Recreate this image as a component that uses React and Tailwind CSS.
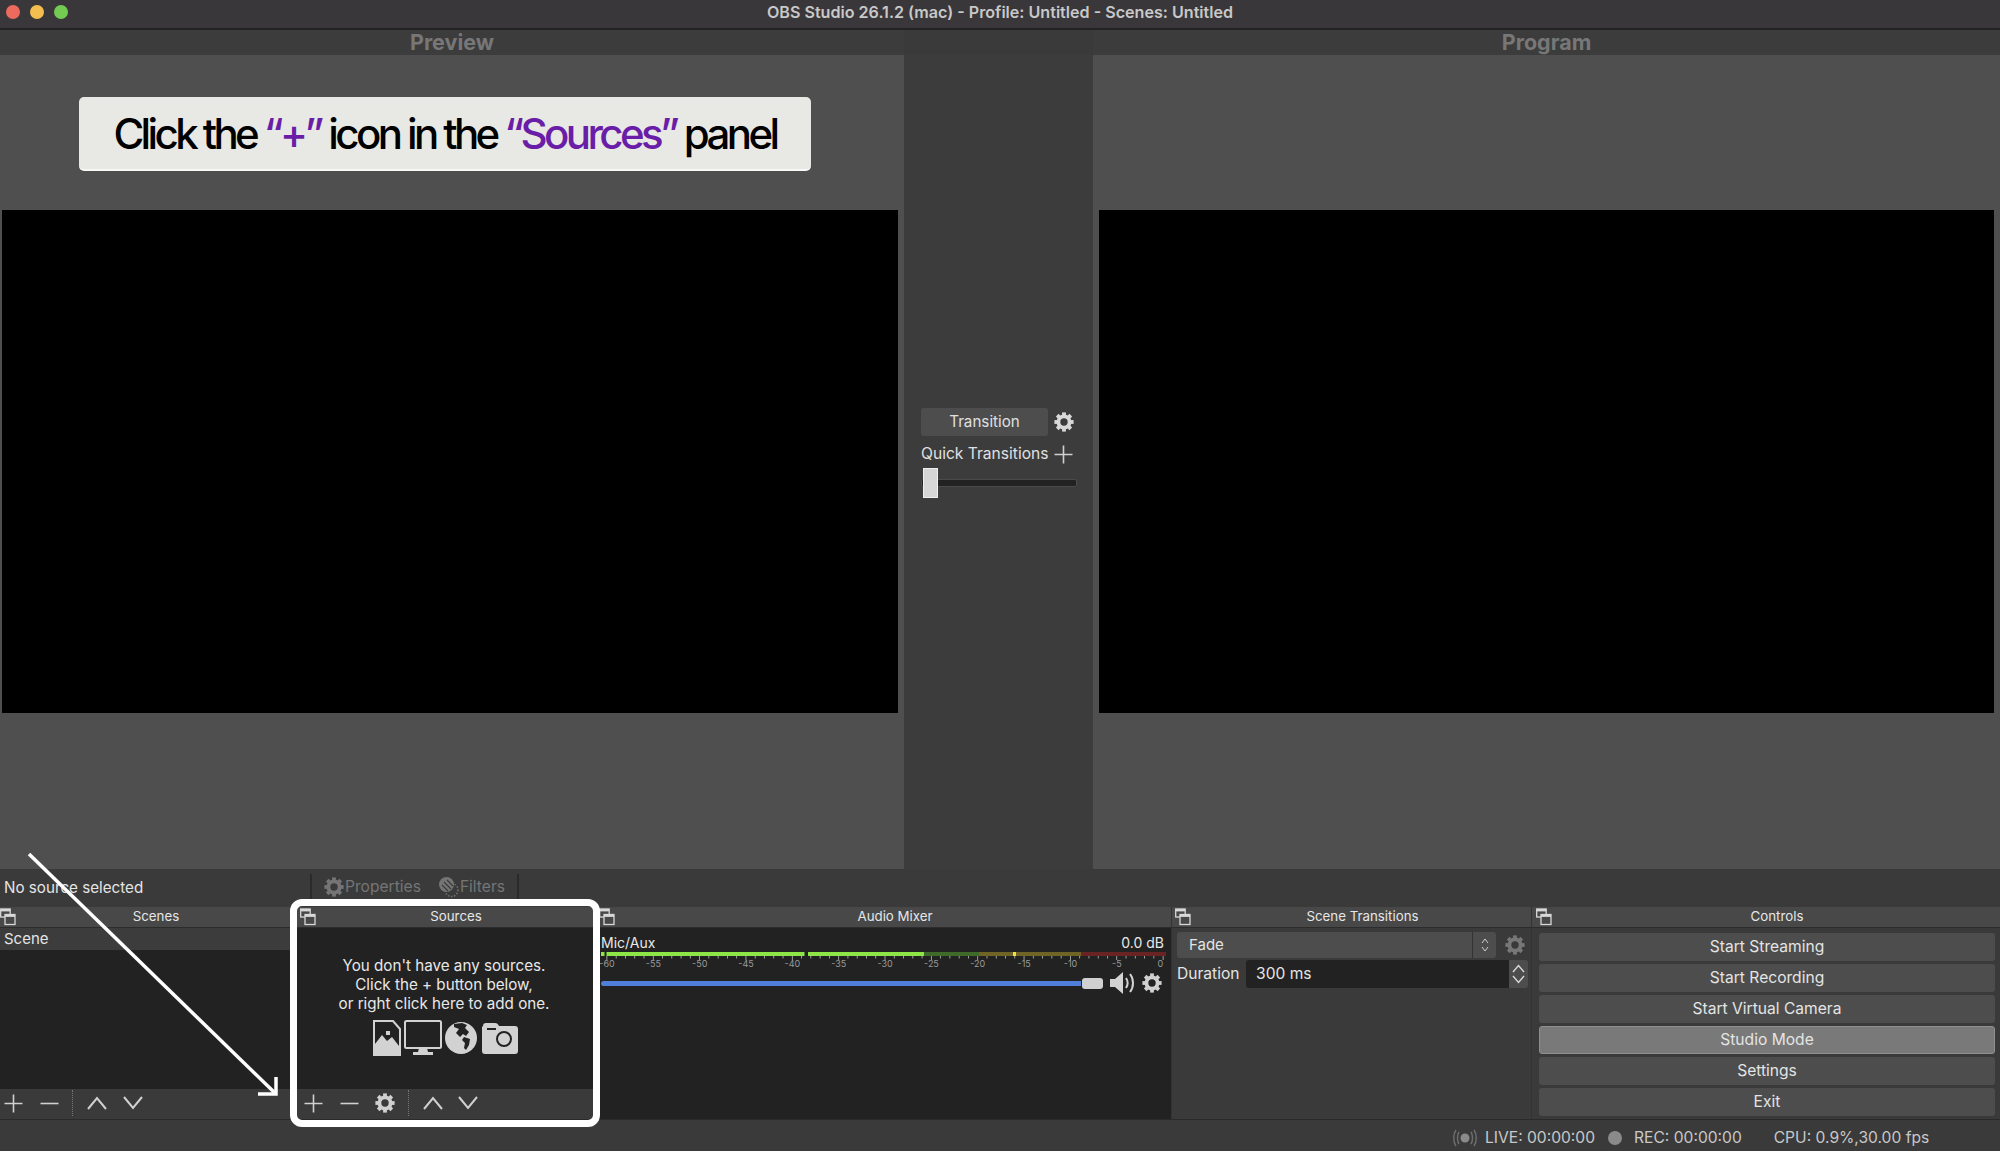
const FONT = { fontFamily: 'Inter, "Liberation Sans", sans-serif' };

const TEETH = [0, 45, 90, 135, 180, 225, 270, 315];

// obs gear: thick ring with eight teeth
const Gear = ({ size = 20, className = 'text-[#d0d0d0]' }) => (
  <svg width={size} height={size} viewBox="0 0 20 20" className={`shrink-0 ${className}`}>
    <circle cx="10" cy="10" r="5.6" fill="none" stroke="currentColor" strokeWidth="3.8" />
    {TEETH.map((deg) => (
      <rect key={deg} x="8.1" y="0.4" width="3.8" height="4" fill="currentColor" transform={`rotate(${deg} 10 10)`} />
    ))}
  </svg>
);

// dock float icon, two overlapped windows
const DockIcon = () => (
  <svg width="16" height="18" viewBox="0 0 16 18" fill="none" stroke="#d8d8d8" strokeWidth="1.3" className="shrink-0">
    <rect x="0.7" y="1" width="9.5" height="8" fill="#484848" />
    <rect x="0.7" y="1" width="9.5" height="2.4" fill="#d8d8d8" stroke="none" />
    <rect x="5" y="6.5" width="10" height="10" fill="#484848" />
    <rect x="5" y="6.5" width="10" height="2.4" fill="#d8d8d8" stroke="none" />
  </svg>
);

const Plus = ({ size = 19, color = '#d0d0d0' }) => (
  <svg width={size} height={size} viewBox="0 0 19 19" stroke={color} strokeWidth="1.6" className="shrink-0">
    <path d="M9.5 0.5V18.5M0.5 9.5H18.5" />
  </svg>
);

const Minus = () => (
  <svg width="19" height="19" viewBox="0 0 19 19" stroke="#d0d0d0" strokeWidth="1.6" className="shrink-0">
    <path d="M0.5 9.5H18.5" />
  </svg>
);

const Up = () => (
  <svg width="20" height="14" viewBox="0 0 20 14" fill="none" stroke="#d0d0d0" strokeWidth="2" className="shrink-0">
    <path d="M1 13L10 2L19 13" />
  </svg>
);

const Down = () => (
  <svg width="20" height="14" viewBox="0 0 20 14" fill="none" stroke="#d0d0d0" strokeWidth="2" className="shrink-0">
    <path d="M1 1L10 12L19 1" />
  </svg>
);

const Dots = () => <div className="w-0 h-[26px] border-l border-dotted border-[#777]" />;

const DockHeader = ({ title, iconClass = 'w-[22px] pl-[3px]' }) => (
  <div className="h-[21px] flex items-center bg-[#484848] border-b border-[#2c2c2c] text-[13.3px] text-[#e6e6e6] shrink-0">
    <div className={iconClass}><DockIcon /></div>
    <div className="flex-1 text-center">{title}</div>
  </div>
);

const ImageIcon = () => (
  <svg width="28" height="36" viewBox="0 0 28 36" className="shrink-0">
    <path d="M1 1H20L27 9V35H1Z" fill="#222" stroke="#d2d2d2" strokeWidth="2" />
    <path d="M2 34V24L9 15L14 21L19 17L26 26V34Z" fill="#d2d2d2" />
    <rect x="13" y="11" width="4" height="4" fill="#d2d2d2" />
  </svg>
);

const MonitorIcon = () => (
  <svg width="38" height="36" viewBox="0 0 38 36" className="shrink-0">
    <rect x="1" y="1" width="36" height="27" rx="1.5" fill="#222" stroke="#d2d2d2" strokeWidth="2" />
    <path d="M15 28H23L24 32H29V35H9V32H14Z" fill="#d2d2d2" />
  </svg>
);

const GlobeIcon = () => (
  <svg width="32" height="32" viewBox="0 0 32 32" className="shrink-0">
    <circle cx="16" cy="16" r="16" fill="#d2d2d2" />
    <path d="M9 2L17 1L22 3L20 6L24 10L21 14L18 12L15 15L11 11L14 7L9 5Z" fill="#222" />
    <path d="M19 15L25 17L24 23L21 28L19 26L20 21L17 18Z" fill="#222" />
  </svg>
);

const CameraIcon = () => (
  <svg width="36" height="32" viewBox="0 0 36 32" className="shrink-0">
    <path d="M1 4C1 2 2 1 4 1H13C15 1 16 2 17 4H33C35 4 36 5 36 7V29C36 31 35 32 33 32H3C1 32 0 31 0 29V5Z" fill="#d2d2d2" />
    <rect x="5" y="6" width="9" height="2" fill="#222" />
    <circle cx="22" cy="17" r="7" fill="#d2d2d2" stroke="#222" strokeWidth="2" />
  </svg>
);

const Speaker = () => (
  <svg width="28" height="24" viewBox="0 0 28 24" className="shrink-0">
    <path d="M1 8H6L14 1V23L6 16H1Z" fill="#d2d2d2" />
    <path d="M17 7C19 10 19 14 17 17M21 3C25 8 25 16 21 21" fill="none" stroke="#d2d2d2" strokeWidth="2" />
  </svg>
);

const FilterIcon = () => (
  <svg width="20" height="21" viewBox="0 0 20 21" fill="none" className="shrink-0">
    <circle cx="12.5" cy="13" r="6.5" stroke="#757575" strokeWidth="1.4" strokeDasharray="1.4 1.6" />
    <circle cx="7.5" cy="7.5" r="7.5" fill="#757575" />
    <path d="M5 5L12 12M8 3L14 9M3 8L9 14" stroke="#3a3a3a" strokeWidth="1.1" />
  </svg>
);

const LiveIcon = () => (
  <svg width="24" height="18" viewBox="0 0 24 18" fill="none" stroke="#6f6f6f" strokeWidth="1.4" className="shrink-0">
    <circle cx="12" cy="9" r="4.5" fill="#8a8a8a" stroke="none" />
    <path d="M6 3C4 6 4 12 6 15M18 3C20 6 20 12 18 15M3 1C0 5 0 13 3 17M21 1C24 5 24 13 21 17" />
  </svg>
);

// level meter and its dB scale
const METER_LABELS = [-60, -55, -50, -45, -40, -35, -30, -25, -20, -15, -10, -5, 0];

const Meter = () => (
  <svg width="566" height="20" viewBox="0 0 566 20" className="block overflow-visible">
    <rect x="0" y="0" width="3.5" height="4" fill="#8ee646" />
    <rect x="5.5" y="0" width="198" height="4" fill="#8ee646" />
    <rect x="207" y="0" width="116" height="4" fill="#8ee646" />
    <rect x="323" y="0" width="55" height="4" fill="#3e6a2a" />
    <rect x="378" y="0" width="102" height="4" fill="#6f6326" />
    <rect x="412" y="0" width="3" height="4" fill="#f2de4a" />
    <rect x="480" y="0" width="85" height="4" fill="#6a2323" />
    {Array.from({ length: 61 }, (_, i) => (
      <rect key={i} x={5.5 + i * 9.27} y="4" width="0.8" height={i % 5 === 0 ? 4 : 2.5} fill="#bbb" />
    ))}
    {METER_LABELS.map((db, i) => (
      <text
        key={db}
        x={6 + i * 46.35}
        y="15"
        fontSize="9"
        fill="#9a9a9a"
        textAnchor={db === 0 ? 'end' : 'middle'}
        style={{ fontFamily: 'Inter, sans-serif' }}
      >
        {db}
      </text>
    ))}
  </svg>
);

const CONTROLS = ['Start Streaming', 'Start Recording', 'Start Virtual Camera', 'Studio Mode', 'Settings', 'Exit'];

const Canvas = () => <div className="h-[503px] bg-black" />;

export default function App() {
  return (
    <div className="relative w-[2000px] h-[1151px] overflow-hidden flex flex-col bg-[#3a3a3a] text-[15.2px] text-[#e4e4e4]" style={FONT}>
      {/* title bar */}
      <div className="relative h-[28px] shrink-0 flex items-center justify-center bg-[#39373a] pb-[4px]">
        <div className="absolute left-[6px] top-[5px] flex gap-[10px]">
          <span className="w-[14px] h-[14px] rounded-full bg-[#ec6a5e]" />
          <span className="w-[14px] h-[14px] rounded-full bg-[#f4bf4f]" />
          <span className="w-[14px] h-[14px] rounded-full bg-[#74cb51]" />
        </div>
        <span className="font-semibold text-[16.1px] text-[#c8c8c8]">OBS Studio 26.1.2 (mac) - Profile: Untitled - Scenes: Untitled</span>
      </div>
      <div className="h-[2px] shrink-0 bg-[#222]" />

      {/* preview / transition / program */}
      <div className="h-[839px] shrink-0 flex">
        <div className="w-[904px] flex flex-col">
          <div className="h-[25px] flex items-center justify-center font-bold text-[21.5px] text-[#777] bg-[#3c3c3c]">Preview</div>
          <div className="flex-1 bg-[#4f4f4f] pt-[155px] pl-[2px] pr-[6px]">
            <Canvas />
          </div>
        </div>
        <div className="w-[189px] bg-[#3c3c3c] mt-[25px] flex flex-col justify-center px-[17px] pb-[18px]">
          <div className="flex items-center">
            <div className="w-[127px] h-[28px] rounded-[3px] bg-[#4d4d4d] flex items-center justify-center text-[#e0e0e0]">Transition</div>
            <Gear className="ml-[6px] text-[#d8d8d8]" />
          </div>
          <div className="flex items-center mt-[6px] h-[24px]">
            <span className="w-[127px] whitespace-nowrap text-[15.6px] text-[#e0e0e0]">Quick Transitions</span>
            <div className="ml-[6px]"><Plus /></div>
          </div>
          <div className="relative mt-[2px] h-[30px] flex items-center w-[156px]">
            <div className="w-full h-[8px] rounded-[2px] bg-[#222] border border-[#4a4a4a]" />
            <div className="absolute left-[2px] top-0 w-[15px] h-[30px] bg-[#d6d6d6] border border-[#eee]" />
          </div>
        </div>
        <div className="flex-1 flex flex-col">
          <div className="h-[25px] flex items-center justify-center font-bold text-[21.5px] text-[#777] bg-[#3c3c3c]">Program</div>
          <div className="flex-1 bg-[#4f4f4f] pt-[155px] pl-[6px] pr-[6px]">
            <Canvas />
          </div>
        </div>
      </div>

      {/* source toolbar */}
      <div className="h-[38px] shrink-0 flex items-center bg-[#3a3a3a]">
        <span className="w-[310px] pl-[4px]">No source selected</span>
        <div className="self-start w-[209px] h-[26px] mt-[5px] border-x-2 border-[#2a2a2a] flex items-center pl-[12px] text-[15.6px] text-[#757575]">
          <Gear className="text-[#757575]" />
          <span className="ml-[1px]">Properties</span>
          <div className="ml-[18px]"><FilterIcon /></div>
          <span className="ml-[1px]">Filters</span>
        </div>
      </div>

      {/* docks */}
      <div className="h-[213px] shrink-0 flex border-b border-[#2a2a2a] text-[14px]">
        <div className="w-[297px] flex flex-col pr-[7px]">
          <DockHeader title="Scenes" iconClass="w-[22px]" />
          <div className="h-[22px] flex items-center pl-[4px] bg-[#3c3c3c] text-[15px]">Scene</div>
          <div className="flex-1 bg-[#222]" />
          <div className="h-[30px] flex items-center bg-[#3a3a3a] pl-[4px] pb-[2px]">
            <Plus />
            <div className="ml-[17px]"><Minus /></div>
            <div className="ml-[13px]"><Dots /></div>
            <div className="ml-[14px]"><Up /></div>
            <div className="ml-[16px]"><Down /></div>
          </div>
        </div>

        <div className="w-[300px] flex flex-col pr-[4px]">
          <DockHeader title="Sources" />
          <div className="flex-1 bg-[#222] flex flex-col items-center pr-[2px] pt-[28px]">
            <div className="text-center text-[15.2px] leading-[19px] text-[#e8e8e8]">
              <div>You don't have any sources.</div>
              <div>Click the + button below,</div>
              <div>or right click here to add one.</div>
            </div>
            <div className="flex items-center gap-[3px] mt-[8px] h-[34px] pl-[3px]">
              <ImageIcon />
              <MonitorIcon />
              <GlobeIcon />
              <div className="ml-[2px]"><CameraIcon /></div>
            </div>
          </div>
          <div className="h-[30px] flex items-center bg-[#3a3a3a] pl-[7px] pb-[2px]">
            <Plus />
            <div className="ml-[17px]"><Minus /></div>
            <Gear className="ml-[16px] text-[#d0d0d0]" />
            <div className="ml-[13px]"><Dots /></div>
            <div className="ml-[14px]"><Up /></div>
            <div className="ml-[15px]"><Down /></div>
          </div>
        </div>

        <div className="w-[574px] flex flex-col bg-[#222]">
          <DockHeader title="Audio Mixer" iconClass="w-[22px] pl-[2px]" />
          <div className="pl-[4px] pr-[7px] pt-[4px]">
            <div className="flex justify-between h-[20px] items-center text-[14px] text-[#e8e8e8]">
              <span>Mic/Aux</span>
              <span>0.0 dB</span>
            </div>
            <Meter />
            <div className="flex items-center -mt-[2px] h-[26px]">
              <div className="w-[480px] h-[5px] rounded-l-full bg-[#4f7fd8]" />
              <div className="w-[21px] ml-[1px] h-[11px] rounded-[3px] bg-[#d0d0d0]" />
              <div className="ml-[6px]"><Speaker /></div>
              <Gear className="ml-[5px] text-[#d0d0d0]" />
            </div>
          </div>
        </div>

        <div className="w-[361px] border-x border-[#333] flex flex-col">
          <DockHeader title="Scene Transitions" />
          <div className="pl-[5px] pt-[4px]">
            <div className="flex items-center">
              <div className="w-[319px] h-[26px] rounded-[3px] bg-[#4d4d4d] flex items-center">
                <span className="flex-1 pl-[12px] text-[15px]">Fade</span>
                <div className="w-[24px] h-full border-l border-[#333] flex items-center justify-center">
                  <svg width="8" height="16" viewBox="0 0 8 16" fill="none" stroke="#cfcfcf"><path d="M1 6L4 2L7 6M1 10L4 14L7 10" /></svg>
                </div>
              </div>
              <Gear className="ml-[9px] text-[#777]" />
            </div>
            <div className="flex items-center mt-[2px]">
              <span className="w-[69px] text-[15.6px] whitespace-nowrap">Duration</span>
              <div className="w-[263px] h-[28px] rounded-l-[3px] bg-[#222] flex items-center pl-[10px] text-[15.6px]">300 ms</div>
              <div className="w-[19px] h-[28px] rounded-r-[3px] bg-[#4d4d4d] flex flex-col items-center justify-center gap-[2px]">
                <svg width="13" height="9" viewBox="0 0 13 9" fill="none" stroke="#d8d8d8" strokeWidth="1.4"><path d="M1 8L6.5 1.5L12 8" /></svg>
                <svg width="13" height="9" viewBox="0 0 13 9" fill="none" stroke="#d8d8d8" strokeWidth="1.4"><path d="M1 1L6.5 7.5L12 1" /></svg>
              </div>
            </div>
          </div>
        </div>

        <div className="flex-1 flex flex-col">
          <DockHeader title="Controls" iconClass="w-[22px] pl-[4px]" />
          <div className="pl-[7px] pr-[5px] pt-[5px] flex flex-col gap-[3px]">
            {CONTROLS.map((label) => (
              <div
                key={label}
                className={label === 'Studio Mode'
                  ? 'h-[28px] rounded-[3px] flex items-center justify-center bg-[#797979] border border-[#8f8f8f] text-[15.6px]'
                  : 'h-[28px] rounded-[3px] flex items-center justify-center bg-[#4d4d4d] text-[15.6px]'}
              >
                {label}
              </div>
            ))}
          </div>
        </div>
      </div>

      {/* status bar */}
      <div className="flex-1 flex items-center pl-[1453px] pt-[5px] text-[15.6px] text-[#c8c8c8]">
        <LiveIcon />
        <span className="ml-[8px]">LIVE: 00:00:00</span>
        <span className="ml-[13px] w-[14px] h-[14px] rounded-full bg-[#8a8a8a]" />
        <span className="ml-[12px]">REC: 00:00:00</span>
        <span className="ml-[32px]">CPU: 0.9%,30.00 fps</span>
      </div>

      {/* tutorial overlays */}
      <div className="absolute left-[79px] top-[97px] w-[732px] h-[74px] rounded-[5px] bg-[#e8e9e4] border-b-2 border-[#f8f8f6] flex items-center justify-center font-medium text-[42px] tracking-[-3.6px] text-black whitespace-nowrap">
        <span>Click the <span className="text-[#6a1ea8]">“+”</span> icon in the <span className="text-[#6a1ea8]">“Sources”</span> panel</span>
      </div>
      <div className="absolute left-[290px] top-[899px] w-[310px] h-[228px] rounded-[12px] border-[7px] border-white" />
      <svg className="absolute left-0 top-0 pointer-events-none" width="300" height="1151" viewBox="0 0 300 1151" fill="none" stroke="#fff" strokeWidth="3.5">
        <path d="M29 854L276 1094" />
        <path d="M258 1094H276V1077" />
      </svg>
    </div>
  );
}
